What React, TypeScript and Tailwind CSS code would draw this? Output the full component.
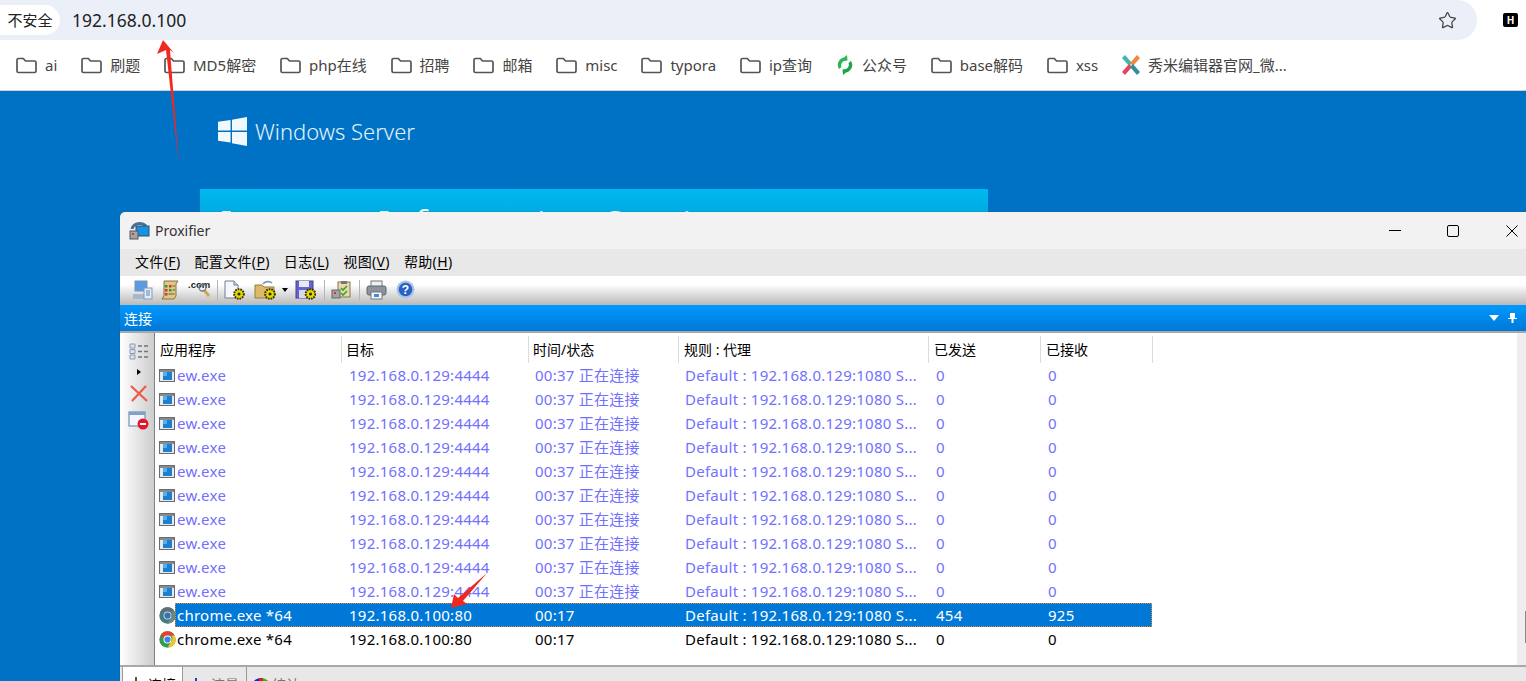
import { Star } from "lucide-react";

const BASE = "font-['Noto_Sans','Noto_Sans_CJK_SC',sans-serif]";

const bookmarks: { label: string; icon?: "green" | "xiumi" }[] = [
  { label: "ai" },
  { label: "刷题" },
  { label: "MD5解密" },
  { label: "php在线" },
  { label: "招聘" },
  { label: "邮箱" },
  { label: "misc" },
  { label: "typora" },
  { label: "ip查询" },
  { label: "公众号", icon: "green" },
  { label: "base解码" },
  { label: "xss" },
  { label: "秀米编辑器官网_微...", icon: "xiumi" },
];

function FolderIcon() {
  return (
    <svg width="23" height="18" viewBox="0 0 23 18" fill="none" className="shrink-0">
      <path d="M2 15V4a1.500 1.500 0 0 1 1.500-1.500h4.800l2.200 2.500h9a1.500 1.500 0 0 1 1.500 1.500V15a1.500 1.500 0 0 1-1.500 1.500h-16A1.500 1.500 0 0 1 2 15Z" stroke="#555" strokeWidth="1.700" />
    </svg>
  );
}

function GreenIcon() {
  return (
    <svg width="20" height="22" viewBox="0 0 20 22" fill="none" className="shrink-0">
      <path d="M4 15A7.500 7.500 0 0 1 9 3.500L12 1l.5 5.500L9 7a4.500 4.500 0 0 0-2.500 6Z" fill="#2fb457" />
      <path d="M16 7a7.500 7.500 0 0 1-5 11.500L8 21l-.5-5.500L11 15a4.500 4.500 0 0 0 2.500-6Z" fill="#1fa34a" />
    </svg>
  );
}

function XiumiIcon() {
  return (
    <svg width="20" height="20" viewBox="0 0 20 20" className="shrink-0">
      <path d="M1 3 4 0l7 8-3 3Z" fill="#3fb7b0" />
      <path d="M19 3 16 0 9 8l3 3Z" fill="#f0883e" />
      <path d="M1 17l3 3 7-8-3-3Z" fill="#e8445a" />
      <path d="M19 17l-3 3-7-8 3-3Z" fill="#2f8f9d" />
    </svg>
  );
}

function WindowsLogo() {
  return (
    <svg width="29" height="29" viewBox="0 0 30 30" className="shrink-0" fill="#f2f9fd">
      <path d="M0 5 13 3v11H0ZM14.500 2.800 30 0v14H14.500ZM0 15.500h13v11L0 24.500ZM14.500 15.500H30V30l-15.500-2.800Z" />
    </svg>
  );
}

function Gear({ x, y }: { x: number; y: number }) {
  return (
    <g>
      <circle cx={x} cy={y} r="4.800" fill="#e6dc00" stroke="#2e2c04" strokeWidth="2" strokeDasharray="1.600 1" />
      <circle cx={x} cy={y} r="1.600" fill="#2e2c04" />
    </g>
  );
}

function ToolbarIcon({ name }: { name: string }) {
  if (name === "computer")
    return (
      <svg width="21" height="20" viewBox="0 0 21 20">
        <rect x="3" y="1" width="12" height="10" fill="#5a9be6" stroke="#7f92ad" />
        <rect x="1" y="14" width="13" height="5" fill="#a8b8cc" />
        <rect x="12" y="8" width="8" height="11" fill="#e4ebf5" stroke="#7f9bc0" />
        <path d="M14 11h4M14 13h4M14 15h4" stroke="#5f88bd" />
      </svg>
    );
  if (name === "scroll")
    return (
      <svg width="20" height="20" viewBox="0 0 20 20">
        <path d="M4 1h14l-2 3v12l-2 3H2l2-3Z" fill="#dcc98a" stroke="#8a7038" />
        <rect x="5" y="5" width="2.500" height="2.500" fill="#2f9a3a" />
        <rect x="5" y="9" width="2.500" height="2.500" fill="#d23b2b" />
        <rect x="5" y="13" width="2.500" height="2.500" fill="#d23b2b" />
        <rect x="9" y="5" width="2.500" height="2.500" fill="#d23b2b" />
        <rect x="9" y="9" width="2.500" height="2.500" fill="#2f9a3a" />
        <path d="M12.500 6h2.500M12.500 10h2.500M8.500 14h6" stroke="#6b5a2a" />
      </svg>
    );
  if (name === "com")
    return (
      <svg width="23" height="20" viewBox="0 0 23 20">
        <text x="0" y="8" fontSize="9.500" fontWeight="700" fontFamily="Liberation Sans" fill="#222">.com</text>
        <path d="m16 10 5 6" stroke="#d0a850" strokeWidth="2.800" />
        <circle cx="14.500" cy="7.500" r="3.500" fill="none" stroke="#6f7884" strokeWidth="1.300" />
      </svg>
    );
  if (name === "doc")
    return (
      <svg width="24" height="20" viewBox="0 0 24 20">
        <path d="M3 1h9l4 4v13H3Z" fill="#f5f7fb" stroke="#6d7d98" />
        <path d="M12 1v4h4" fill="#cdd7e8" stroke="#6d7d98" />
        <Gear x={17} y={14} />
      </svg>
    );
  if (name === "folder")
    return (
      <svg width="23" height="20" viewBox="0 0 23 20">
        <path d="M1 5h7l2 2h10v11H1Z" fill="#dcb968" stroke="#94803f" />
        <path d="M9 4c2-3 7-3 9-1" fill="none" stroke="#7d96b8" strokeWidth="1.600" />
        <Gear x={16} y={14} />
      </svg>
    );
  if (name === "floppy")
    return (
      <svg width="21" height="20" viewBox="0 0 21 20">
        <rect x="1" y="1" width="17" height="17" fill="#6464cc" stroke="#42429a" />
        <rect x="4" y="1" width="10" height="6" fill="#e9e9f5" />
        <rect x="4" y="10" width="9" height="8" fill="#d9d9ee" />
        <Gear x={15.500} y={14} />
      </svg>
    );
  if (name === "clipboard")
    return (
      <svg width="20" height="20" viewBox="0 0 20 20">
        <rect x="7" y="2" width="12" height="15" fill="#ead9ae" stroke="#86764f" />
        <rect x="10" y="1" width="6" height="3" fill="#777" />
        <path d="m10 8 2 2 4-4M10 13l2 2 4-4" fill="none" stroke="#2ea82e" strokeWidth="1.600" />
        <rect x="1" y="10" width="8" height="8" fill="#a3a3a3" stroke="#666" />
        <rect x="3" y="12" width="2" height="2" fill="#d23b2b" />
      </svg>
    );
  if (name === "printer")
    return (
      <svg width="21" height="20" viewBox="0 0 21 20">
        <rect x="5" y="1" width="11" height="6" fill="#f0f0f0" stroke="#777" />
        <rect x="1" y="6" width="19" height="9" rx="2" fill="#8b939c" stroke="#5f666e" />
        <rect x="5" y="12" width="11" height="7" fill="#f7f7f7" stroke="#777" />
        <rect x="8" y="14" width="5" height="3" fill="#3f8be0" />
      </svg>
    );
  return (
    <svg width="19" height="19" viewBox="0 0 19 19">
      <circle cx="9.500" cy="9.500" r="9" fill="#a9c2ea" />
      <circle cx="9.500" cy="9.500" r="6.800" fill="#2a62c4" />
      <text x="9.500" y="14" textAnchor="middle" fontSize="12" fontWeight="700" fontFamily="Liberation Sans" fill="#fff">?</text>
    </svg>
  );
}

function ExeIcon() {
  return (
    <svg width="16" height="13" viewBox="0 0 16 13" className="shrink-0">
      <rect x="0.500" y="0.500" width="15" height="12" fill="#e8e8e8" stroke="#6b6b6b" />
      <rect x="1" y="1" width="14" height="2" fill="#8a8a8a" />
      <rect x="4" y="3" width="9" height="8" fill="#1b7fd1" />
      <rect x="4" y="3" width="4" height="4" fill="#4fb0ee" />
    </svg>
  );
}

function ChromeIcon({ dim }: { dim?: boolean }) {
  const c = dim
    ? { r: "#5f6f7a", y: "#6f8a78", g: "#3f7f80", ring: "#c5d3e0", dot: "#3a6fb8" }
    : { r: "#e0432f", y: "#f7c52b", g: "#2f9e4a", ring: "#ffffff", dot: "#3f80ee" };
  return (
    <svg width="17" height="17" viewBox="0 0 17 17" className="shrink-0">
      <circle cx="8.500" cy="8.500" r="8.200" fill={c.g} />
      <path d="M8.500.3a8.200 8.200 0 0 1 7.100 4.100H8.500a4.100 4.100 0 0 0-3.900 2.900L1.500 4.200A8.200 8.200 0 0 1 8.500.3Z" fill={c.r} />
      <path d="M15.600 4.400A8.200 8.200 0 0 1 8.500 16.700l3.500-6.100a4.100 4.100 0 0 0 .1-6.200Z" fill={c.y} />
      <circle cx="8.500" cy="8.500" r="4" fill={c.ring} />
      <circle cx="8.500" cy="8.500" r="3.100" fill={c.dot} />
    </svg>
  );
}

const COLS = "grid grid-cols-[166px_187px_150px_250px_112px_112px]";

function Row({ app, target, time, rule, sent, recv, kind }: {
  app: string; target: string; time: string; rule: string; sent: string; recv: string;
  kind: "ew" | "sel" | "chrome";
}) {
  const text = kind === "ew" ? "text-[#7270ff]" : kind === "sel" ? "text-white" : "text-black";
  const hl = kind === "sel" ? "bg-[#0078d7] outline-1 outline-dotted outline-[#e88a2a] -outline-offset-1" : "";
  return (
    <div className="flex h-6 w-[997px] items-center">
      <div className="flex w-5 shrink-0 items-center pl-1">
        {kind === "ew" ? <ExeIcon /> : <ChromeIcon dim={kind === "sel"} />}
      </div>
      <div className={`${COLS} h-full items-center text-[15px] tracking-[0.25px] ${text} ${hl}`}>
        <span className="pl-[2px]">{app}</span>
        <span className="pl-2">{target}</span>
        <span className="pl-[7px]">{time}</span>
        <span className="pl-[7px]">{rule}</span>
        <span className="pl-2">{sent}</span>
        <span className="pl-2">{recv}</span>
      </div>
    </div>
  );
}

function Menu({ name, k }: { name: string; k: string }) {
  return (
    <span className="text-[14px] tracking-[0.35px] text-black">
      {name}(<span className="underline underline-offset-2">{k}</span>)
    </span>
  );
}

function Sep({ className }: { className: string }) {
  return <div className={`h-5 w-px bg-[#b5b5b5] ${className}`} />;
}

export default function App() {
  const headers = ["应用程序", "目标", "时间/状态", "规则 : 代理", "已发送", "已接收"];
  const widths = ["w-[187px] pl-[5px]", "w-[187px] pl-[4px]", "w-[150px] pl-[4px]", "w-[250px] pl-[5px]", "w-[112px] pl-[5px]", "w-[112px] pl-[5px]"];
  return (
    <div className={`relative h-[681px] w-[1526px] overflow-hidden bg-white ${BASE}`}>
      <div className="flex h-10">
        <div className="flex w-[1477px] items-center rounded-r-[20px] bg-[#ebeff8]">
          <div className="flex h-[30px] w-[60px] items-center justify-center rounded-r-full bg-white text-[15px] text-[#222]">不安全</div>
          <span className="ml-3 text-[17.500px] text-[#222]">192.168.0.100</span>
          <Star className="ml-auto mr-[20px] h-[19px] w-[19px] text-[#444]" strokeWidth={1.600} />
        </div>
        <div className="ml-[26px] mt-[13px] flex h-[14px] w-[15px] items-center justify-center rounded-[2px] bg-black text-[10px] font-bold leading-none text-white">H</div>
      </div>

      <div className="flex h-[51px] items-center gap-[22.850px] border-b border-[#d0d0d0] pl-[15px] text-[15px] text-[#444]">
        {bookmarks.map((b) => (
          <div key={b.label} className="flex items-center gap-[7px] whitespace-nowrap">
            {b.icon === "green" ? <GreenIcon /> : b.icon === "xiumi" ? <XiumiIcon /> : <FolderIcon />}
            <span>{b.label}</span>
          </div>
        ))}
      </div>

      <div className="h-[590px] bg-[#0072c6] pl-[200px]">
        <div className="flex items-center gap-2 pl-[18px] pt-[26px]">
          <WindowsLogo />
          <span className="-mt-[2px] text-[22px] font-light leading-[30px] text-[#e3f2fb]">Windows Server</span>
        </div>
        <div className="mt-[43px] h-[60px] w-[788px] bg-gradient-to-b from-[#00b9f0] to-[#0096cc] pl-5 pt-[11px] text-[40px] font-light leading-[50px] text-white">
          Internet Information Services
        </div>
      </div>

      <div className="absolute left-[120px] top-[212px] flex h-[480px] w-[1421px] flex-col overflow-hidden rounded-tl-[5px] bg-[#f2f2f2] shadow-[0_0_1px_#333]">
        <div className="flex h-[37px] shrink-0 items-center pl-[9px] text-[14px] text-[#333]">
          <svg width="21" height="19" viewBox="0 0 21 19" className="mr-[5px]">
            <path d="M3 8a8 7 0 0 1 14-3" fill="none" stroke="#4b6f94" strokeWidth="3" />
            <rect x="7" y="5" width="13" height="10" fill="#1593e6" stroke="#35505f" />
            <rect x="1" y="10" width="8" height="8" fill="#a5a5a5" stroke="#555" />
            <rect x="3" y="12" width="2" height="2" fill="#d23b2b" />
          </svg>
          <span>Proxifier</span>
          <div className="ml-auto flex">
            <div className="flex w-[58px] justify-center"><div className="mt-[5px] h-px w-3 bg-black" /></div>
            <div className="flex w-[58px] items-center justify-center"><div className="h-3 w-3 rounded-[2px] border border-black" /></div>
            <div className="flex w-[59px] items-center justify-center">
              <svg width="12" height="12" viewBox="0 0 12 12"><path d="m.5.500 11 11m0-11-11 11" stroke="#000" /></svg>
            </div>
          </div>
        </div>

        <div className="flex h-[27px] shrink-0 items-center gap-[14px] bg-[#e8e8e8] pb-[2px] pl-[15px]">
          <Menu name="文件" k="F" />
          <Menu name="配置文件" k="P" />
          <Menu name="日志" k="L" />
          <Menu name="视图" k="V" />
          <Menu name="帮助" k="H" />
        </div>

        <div className="flex h-[29px] shrink-0 items-center bg-gradient-to-b from-white from-30% to-[#b9b9b9] pb-[2px] pl-[12px]">
          <ToolbarIcon name="computer" />
          <div className="w-[7px]" />
          <ToolbarIcon name="scroll" />
          <div className="w-2" />
          <ToolbarIcon name="com" />
          <Sep className="ml-[6px] mr-1" />
          <ToolbarIcon name="doc" />
          <div className="w-2" />
          <ToolbarIcon name="folder" />
          <div className="ml-[5px] mr-[7px] h-0 w-0 border-x-[3.500px] border-t-4 border-x-transparent border-t-black" />
          <ToolbarIcon name="floppy" />
          <Sep className="ml-2 mr-[6px]" />
          <ToolbarIcon name="clipboard" />
          <Sep className="ml-2 mr-[6px]" />
          <ToolbarIcon name="printer" />
          <div className="w-[9px]" />
          <ToolbarIcon name="help" />
        </div>

        <div className="flex h-[26px] shrink-0 items-center bg-gradient-to-b from-[#0099ff] to-[#0078d7] pl-[4px] text-[14px] text-white">
          <span>连接</span>
          <div className="ml-auto mr-[24px] flex items-center gap-[9px]">
            <div className="h-0 w-0 border-x-[5.500px] border-t-[6px] border-x-transparent border-t-white" />
            <svg width="9" height="10" viewBox="0 0 9 10"><path d="M2 0h5v5h2v1H5.500v4h-2V6H0V5h2Z" fill="#fff" /></svg>
          </div>
        </div>

        <div className="flex h-[336px] shrink-0 border-y-2 border-[#a8a8a8] bg-white">
          <div className="flex w-[35px] shrink-0 flex-col items-center border-r border-[#808080] bg-gradient-to-r from-white to-[#cdcdcd] pl-[3px] pt-[10px]">
            <svg width="20" height="17" viewBox="0 0 20 17">
              <path d="M1 1h5v4H1ZM1 6.500h5v4H1ZM1 12h5v4H1Z" fill="#dbe2ee" stroke="#8f9bb0" />
              <path d="M9 3h4m2 0h4M9 8.500h4m2 0h4M9 14h4m2 0h4" stroke="#6c7686" strokeWidth="1.400" />
            </svg>
            <div className="mt-[9px] h-0 w-0 border-y-[3.500px] border-l-4 border-y-transparent border-l-black" />
            <svg width="18" height="17" viewBox="0 0 18 17" className="mt-[10px]"><path d="m1 1 16 15M16 1 2 16" stroke="#ef5a48" strokeWidth="2.200" /></svg>
            <svg width="21" height="19" viewBox="0 0 21 19" className="mt-[9px]">
              <rect x="1" y="1" width="16" height="14" fill="#f3f6fb" stroke="#5b7ea8" />
              <rect x="1" y="1" width="16" height="3" fill="#7fa2cc" />
              <circle cx="15" cy="13" r="5.500" fill="#e3172c" />
              <rect x="12" y="12" width="6" height="2" fill="#fff" />
            </svg>
          </div>
          <div className="min-w-0 flex-1 pt-[3px]">
            <div className="flex h-[27px] w-[998px] text-[14px] text-black">
              {headers.map((h, i) => (
                <div key={h} className={`${widths[i]} flex items-center border-r border-[#dcdcdc]`}>{h}</div>
              ))}
            </div>
            {Array.from({ length: 10 }, (_, i) => (
              <Row key={i} kind="ew" app="ew.exe" target="192.168.0.129:4444" time="00:37 正在连接" rule="Default : 192.168.0.129:1080 S..." sent="0" recv="0" />
            ))}
            <Row kind="sel" app="chrome.exe *64" target="192.168.0.100:80" time="00:17" rule="Default : 192.168.0.129:1080 S..." sent="454" recv="925" />
            <Row kind="chrome" app="chrome.exe *64" target="192.168.0.100:80" time="00:17" rule="Default : 192.168.0.129:1080 S..." sent="0" recv="0" />
          </div>
          <div className="mr-[15px] flex w-[9px] shrink-0 flex-col bg-[#eeeeee] pt-[278px]">
            <div className="ml-auto h-[32px] w-px bg-[#888]" />
          </div>
        </div>

        <div className="flex h-[30px] items-start bg-[#e8e8e8] pl-[2px] text-[14px] text-[#777]">
          <div className="flex h-[30px] w-[61px] items-center gap-1 border-x border-[#999] bg-white pl-[5px] pt-[4px] text-black">
            <svg width="16" height="14" viewBox="0 0 16 14"><path d="M7 0h2v9H7ZM0 10h16v1H0Z" fill="#5a5a30" /></svg>
            <span>连接</span>
          </div>
          <div className="flex h-[30px] w-[64px] items-center gap-[6px] border-r border-[#999] pl-[6px] pt-[4px]">
            <svg width="16" height="14" viewBox="0 0 16 14"><path d="M2 5h2v6H2Z" fill="#20a020" /><path d="M6 1h2v10H6Z" fill="#2040d0" /><path d="M10 4h2v7h-2Z" fill="#2040d0" /></svg>
            <span>流量</span>
          </div>
          <div className="flex h-[30px] items-center gap-[2px] pl-[5px] pt-[4px]">
            <svg width="18" height="14" viewBox="0 0 18 14"><path d="M9 1a8 6 0 0 1 8 6H9Z" fill="#18c018" /><path d="M9 1a8 6 0 0 0-8 6h8Z" fill="#1828d0" /><path d="M7 1h4v6H7Z" fill="#d82020" /></svg>
            <span>统计</span>
          </div>
        </div>
      </div>

      <svg width="1526" height="681" className="pointer-events-none absolute left-0 top-0">
        <polygon points="163,40 174,53 170,50 179,166 166,50 157,54" fill="#f0281e" />
        <polygon points="451,608 454,594 458,598 487,573 463,601 467,604" fill="#f0281e" />
      </svg>
    </div>
  );
}
